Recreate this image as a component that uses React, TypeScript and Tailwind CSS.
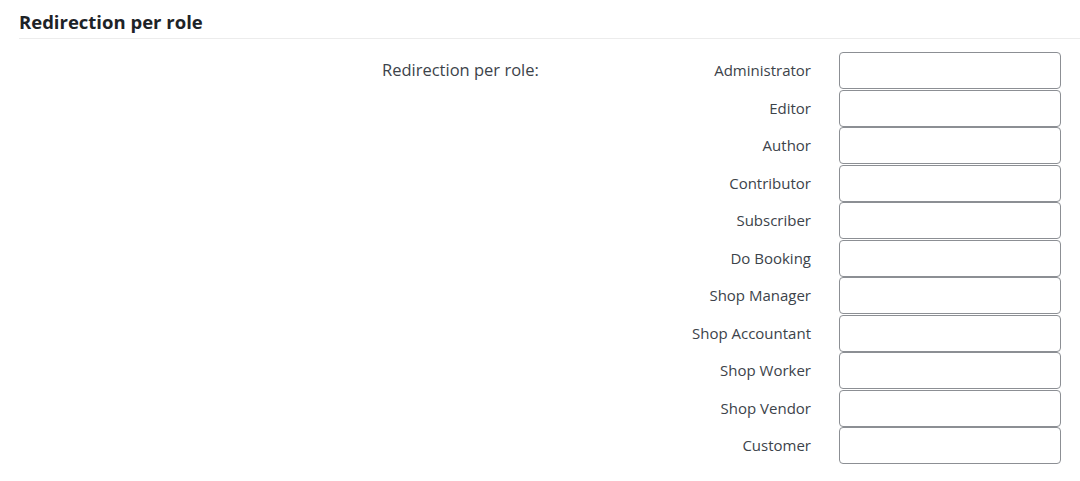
const roles = [
  "Administrator",
  "Editor",
  "Author",
  "Contributor",
  "Subscriber",
  "Do Booking",
  "Shop Manager",
  "Shop Accountant",
  "Shop Worker",
  "Shop Vendor",
  "Customer",
];

export default function App() {
  return (
    <div
      className="min-h-[481px] bg-white pl-[19px] text-[#3c434a]"
      style={{ fontFamily: '"Open Sans", "Noto Sans", sans-serif' }}
    >
      {/* Titre de section */}
      <h3 className="border-b border-[#ececec] pt-[11px] pb-[5px] text-[18.5px] font-bold leading-[22px] text-[#1d2327]">
        Redirection per role
      </h3>

      {/* Ligne du formulaire */}
      <div className="flex pt-[13px]">
        <div className="w-[363px] shrink-0" />
        <div className="w-[200px] shrink-0 pt-[6px] text-[16.5px] leading-[24px] text-[#3c434a]">
          Redirection per role:
        </div>
        <div className="flex flex-col">
          {roles.map((role) => (
            <div key={role} className="flex h-[37.5px] items-center">
              <label className="w-[229px] pb-[1px] text-right text-[15px] text-[#3c434a]">
                {role}
              </label>
              <input
                type="text"
                className="ml-[28px] h-[37px] w-[222px] rounded-[4px] border border-[#8c8f94] bg-white px-2 text-sm outline-none"
              />
            </div>
          ))}
        </div>
      </div>
    </div>
  );
}
